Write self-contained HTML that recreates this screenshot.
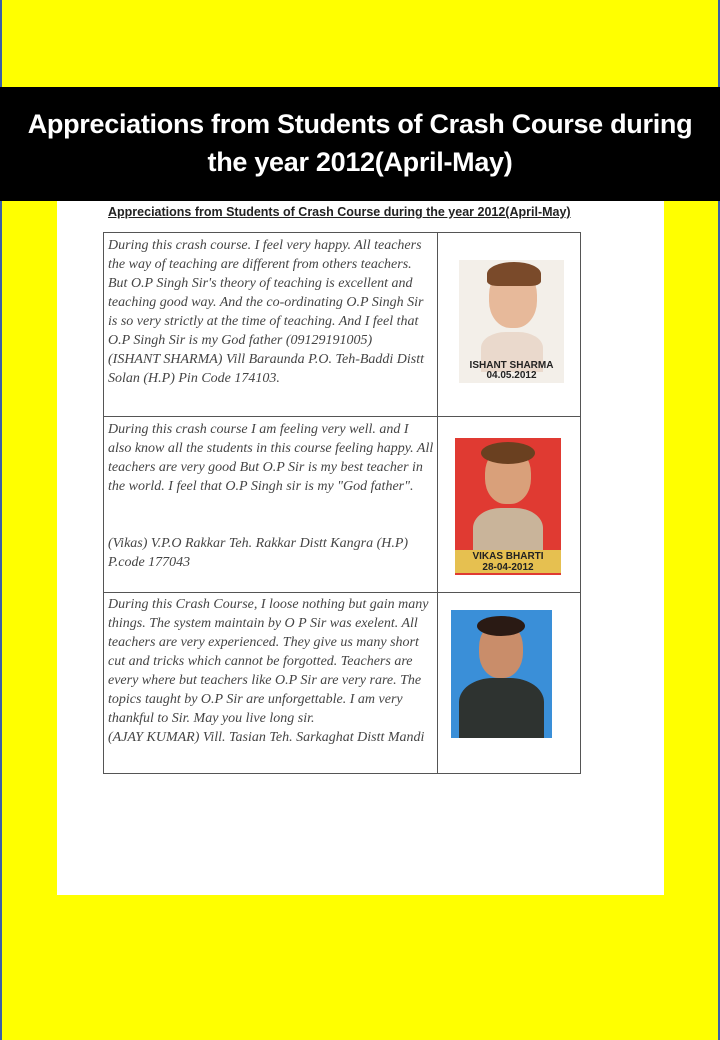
<!DOCTYPE html>
<html><head><style>
body{margin:0;width:720px;height:1040px;background:#ffff00;position:relative;overflow:hidden;font-family:"Liberation Sans",sans-serif}
.bl{position:absolute;left:0;top:0;width:2px;height:1040px;background:#3a5fa8}
.br{position:absolute;right:0;top:0;width:2px;height:1040px;background:#3a5fa8}
.ban{position:absolute;left:0;top:87px;width:720px;height:114px;background:#000;color:#fff;font-weight:bold;font-size:27px;text-align:center;line-height:38px;padding-top:18px;box-sizing:border-box;letter-spacing:-0.3px}
.pg{position:absolute;left:57px;top:201px;width:607px;height:694px;background:#fff}
.t{position:absolute;left:108px;top:205px;font-size:12.5px;font-weight:bold;text-decoration:underline;color:#222}
.tb{position:absolute;left:103px;top:232px;width:476px;height:540px;border:1px solid #555}
.h{position:absolute;left:0;width:476px;border-top:1px solid #555}
.v{position:absolute;left:333px;top:0;height:540px;border-left:1px solid #555}
.hw{position:absolute;left:4px;width:326px;font-family:"Liberation Serif",serif;font-style:italic;font-size:14px;line-height:19px;color:#444}
.ph{position:absolute;overflow:hidden}
.cap{position:absolute;bottom:2px;width:100%;text-align:center;font-size:10px;font-weight:bold;line-height:10px;color:#222}
</style></head><body>
<div class="bl"></div><div class="br"></div>
<div class="ban">Appreciations from Students of Crash Course during<br>the year 2012(April-May)</div>
<div class="pg"></div>
<div class="t">Appreciations from Students of Crash Course during the year 2012(April-May)</div>
<div class="tb">
<div class="h" style="top:183px"></div><div class="h" style="top:359px"></div><div class="v"></div>
<div class="hw" style="top:3px">During this crash course. I feel very happy. All teachers the way of teaching are different from others teachers. But O.P Singh Sir's theory of teaching is excellent and teaching good way. And the co-ordinating O.P Singh Sir is so very strictly at the time of teaching. And I feel that O.P Singh Sir is my God father (09129191005)<br>(ISHANT SHARMA) Vill Baraunda P.O. Teh-Baddi Distt Solan (H.P) Pin Code 174103.</div>
<div class="hw" style="top:187px">During this crash course I am feeling very well. and I also know all the students in this course feeling happy. All teachers are very good But O.P Sir is my best teacher in the world. I feel that O.P Singh sir is my "God father".<br><br><br>(Vikas) V.P.O Rakkar Teh. Rakkar Distt Kangra (H.P) P.code 177043</div>
<div class="hw" style="top:362px">During this Crash Course, I loose nothing but gain many things. The system maintain by O P Sir was exelent. All teachers are very experienced. They give us many short cut and tricks which cannot be forgotted. Teachers are every where but teachers like O.P Sir are very rare. The topics taught by O.P Sir are unforgettable. I am very thankful to Sir. May you live long sir.<br>(AJAY KUMAR) Vill. Tasian Teh. Sarkaghat Distt Mandi</div>
<div class="ph" style="left:355px;top:27px;width:105px;height:123px;background:#f3efe9"><div style="position:absolute;left:30px;top:8px;width:48px;height:60px;border-radius:45%;background:#e7b99a"></div><div style="position:absolute;left:28px;top:2px;width:54px;height:24px;border-radius:50% 50% 20% 20%;background:#7a4a2a"></div><div style="position:absolute;left:22px;top:72px;width:62px;height:40px;background:#ead9cc;border-radius:40% 40% 0 0"></div><div class="cap" style="color:#222">ISHANT SHARMA<br>04.05.2012</div></div>
<div class="ph" style="left:351px;top:205px;width:106px;height:137px;background:#e03a32"><div style="position:absolute;left:30px;top:10px;width:46px;height:56px;border-radius:45%;background:#d9a07a"></div><div style="position:absolute;left:26px;top:4px;width:54px;height:22px;border-radius:50%;background:#6a4020"></div><div style="position:absolute;left:18px;top:70px;width:70px;height:50px;background:#c9b49a;border-radius:40% 40% 0 0"></div><div class="cap" style="background:#e6c050;height:22px;line-height:11px;padding-top:1px">VIKAS BHARTI<br>28-04-2012</div></div>
<div class="ph" style="left:347px;top:377px;width:101px;height:128px;background:#3a8fd8"><div style="position:absolute;left:28px;top:12px;width:44px;height:56px;border-radius:45%;background:#c98d6a"></div><div style="position:absolute;left:26px;top:6px;width:48px;height:20px;border-radius:50%;background:#2a1a14"></div><div style="position:absolute;left:8px;top:68px;width:85px;height:60px;background:#2e3330;border-radius:40% 40% 0 0"></div></div>
</div>
</body></html>
